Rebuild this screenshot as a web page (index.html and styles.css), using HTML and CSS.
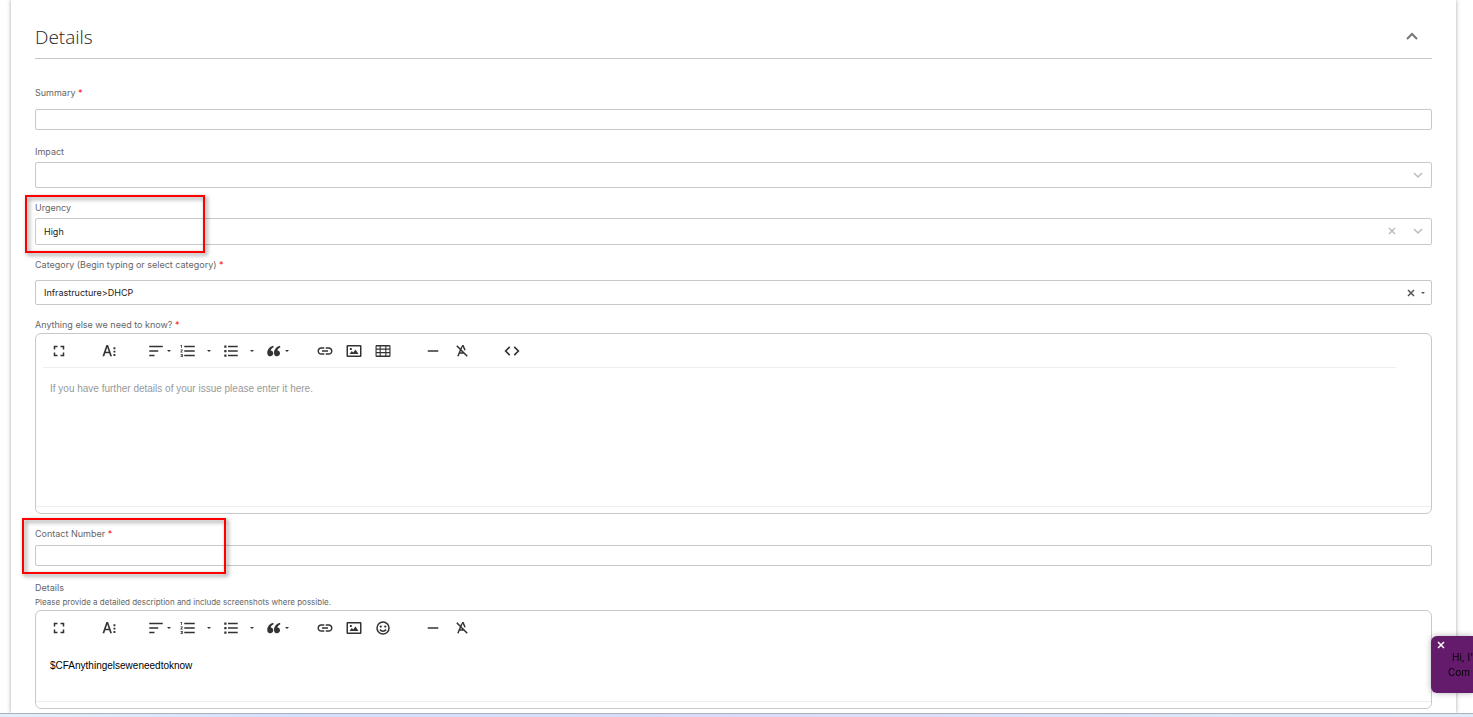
FILE: index.html
```html
<!DOCTYPE html>
<html lang="en">
<head>
  <meta charset="UTF-8">
  <meta name="viewport" content="width=device-width, initial-scale=1.0">
  <title>Details</title>
  <link rel="stylesheet" href="styles.css">
</head>
<body>

  <!-- Shared icons -->
  <svg class="sprite" aria-hidden="true">
    <symbol id="i-full" viewBox="0 0 24 24"><path d="M5 10V5h5v2H7v3zM14 5h5v5h-2V7h-3zM5 14h2v3h3v2H5zM17 14h2v5h-5v-2h3z"/></symbol>
    <symbol id="i-font" viewBox="0 0 24 24"><path d="M8.500 4h2.300l5.200 15h-2.400l-1.300-4H7l-1.300 4H3.300zm-.8 9h3.900L9.700 7zM18 7h2.500v2.500H18zM18 11.500h2.500V14H18zM18 16h2.500v2.500H18z"/></symbol>
    <symbol id="i-align" viewBox="0 0 24 24"><path d="M3 5h18v2H3zM3 11h12v2H3zM3 17h7v2H3z"/></symbol>
    <symbol id="i-ol" viewBox="0 0 24 24"><path d="M2 17h2v.5H3v1h1v.5H2v1h3v-4H2v1zm1-9h1V4H2v1h1v3zm-1 3h1.800L2 13.100v.9h3v-1H3.200L5 10.900V10H2v1zm5-6v2h14V5H7zm0 14h14v-2H7v2zm0-6h14v-2H7v2z"/></symbol>
    <symbol id="i-ul" viewBox="0 0 24 24"><path d="M3 4.500h3v3H3zM3 10.500h3v3H3zM3 16.500h3v3H3zM8 5h13v2H8zM8 11h13v2H8zM8 17h13v2H8z"/></symbol>
    <symbol id="i-quote" viewBox="0 0 24 24"><path d="M11 5C6 6.500 3 10 3 14.500 3 17.500 5 19 7 19c2.300 0 4-1.700 4-3.900 0-2.100-1.500-3.700-3.500-3.700C8 9.500 9 8 11.500 7zM20 5c-5 1.500-8 5-8 9.500 0 3 2 4.500 4 4.500 2.300 0 4-1.700 4-3.900 0-2.100-1.500-3.700-3.500-3.700C17 9.500 18 8 20.500 7z"/></symbol>
    <symbol id="i-link" viewBox="0 0 24 24"><path d="M3.900 12c0-1.710 1.390-3.100 3.100-3.100h4V7H7c-2.760 0-5 2.240-5 5s2.240 5 5 5h4v-1.900H7c-1.710 0-3.100-1.390-3.100-3.100zM8 13h8v-2H8v2zm9-6h-4v1.900h4c1.710 0 3.100 1.390 3.100 3.100s-1.390 3.100-3.100 3.100h-4V17h4c2.760 0 5-2.240 5-5s-2.240-5-5-5z"/></symbol>
    <symbol id="i-image" viewBox="0 0 24 24"><path fill-rule="evenodd" d="M3 4h18l1 1v14l-1 1H3l-1-1V5zm1 2v12h16V6zM6 16l3-4 2 2 3-4 4 6zM6.500 8h2.500v2.500H6.500z"/></symbol>
    <symbol id="i-table" viewBox="0 0 24 24"><path fill-rule="evenodd" d="M3 4h18l1 1v14l-1 1H3l-1-1V5zm.5 2v2.700h4V6zm5.500 0v2.700h6V6zm7.500 0v2.700h4V6zm-13 4.200v3.200h4v-3.200zm5.500 0v3.200h6v-3.200zm7.500 0v3.200h4v-3.200zm-13 4.700v3.100h4v-3.100zm5.500 0v3.100h6v-3.100zm7.500 0v3.100h4v-3.100z"/></symbol>
    <symbol id="i-smile" viewBox="0 0 24 24"><path d="M12 4a8 8 0 1 0 0 16 8 8 0 0 0 0-16zM8 14c1 1.500 2.500 2.300 4 2.300s3-.8 4-2.300" fill="none" stroke="currentColor" stroke-width="2"/><circle cx="9" cy="10" r="1.500"/><circle cx="15" cy="10" r="1.500"/></symbol>
    <symbol id="i-hr" viewBox="0 0 24 24"><path d="M5 11h14v2H5z"/></symbol>
    <symbol id="i-clear" viewBox="0 0 24 24"><path d="M5 5l14 14M12 6L6.500 19M8.500 14.500h6M12 5h1.500l2.500 6" fill="none" stroke="currentColor" stroke-width="2"/></symbol>
    <symbol id="i-code" viewBox="0 0 24 24"><path d="M9 6.500L3.500 12 9 17.500M15 6.500l5.500 5.500-5.500 5.500" fill="none" stroke="currentColor" stroke-width="2.200"/></symbol>
    <symbol id="i-caret" viewBox="0 0 8 8"><path d="M2 3h4L4 5z"/></symbol>
    <symbol id="i-x" viewBox="0 0 10 10"><path d="M2 2l6 6M8 2L2 8" fill="none" stroke="currentColor" stroke-width="1.500"/></symbol>
    <symbol id="i-chevron" viewBox="0 0 10 10"><path d="M1 3l4 4 4-4" fill="none" stroke="currentColor" stroke-width="1.500"/></symbol>
  </svg>

  <main class="card">
    <header class="card-header">
      <h1>Details</h1>
      <button type="button" class="collapse" aria-label="Collapse section">
        <svg viewBox="0 0 14 10"><path d="M2 7l5-5 5 5"/></svg>
      </button>
    </header>

    <form>
      <div class="field field-text">
        <label for="summary">Summary <span class="req">*</span></label>
        <input type="text" id="summary" class="control">
      </div>

      <div class="field">
        <label for="impact">Impact</label>
        <div class="select-wrap">
          <select id="impact" class="control"><option></option></select>
          <div class="select-icons"><svg class="icon-sm"><use href="#i-chevron"/></svg></div>
        </div>
      </div>

      <div class="field field-urgency">
        <label for="urgency">Urgency</label>
        <div class="select-wrap">
          <select id="urgency" class="control"><option>High</option></select>
          <div class="select-icons">
            <button type="button" aria-label="Clear urgency"><svg class="icon-sm"><use href="#i-x"/></svg></button>
            <svg class="icon-sm"><use href="#i-chevron"/></svg>
          </div>
        </div>
        <div class="highlight highlight-urgency"></div>
      </div>

      <div class="field field-category">
        <label for="category">Category (Begin typing or select category) <span class="req">*</span></label>
        <div class="select-wrap">
          <select id="category" class="control"><option>Infrastructure&gt;DHCP</option></select>
          <div class="select-icons">
            <button type="button" aria-label="Clear category"><svg class="icon-sm"><use href="#i-x"/></svg></button>
            <svg class="caret"><use href="#i-caret"/></svg>
          </div>
        </div>
      </div>

      <div class="field field-editor">
        <label for="anything">Anything else we need to know? <span class="req">*</span></label>
        <div class="editor">
          <div class="toolbar toolbar-ruled">
            <div class="group wide"><button type="button" aria-label="Full screen"><svg><use href="#i-full"/></svg></button></div>
            <div class="group"><button type="button" aria-label="Text style"><svg><use href="#i-font"/></svg></button></div>
            <div class="group lists">
              <button type="button" aria-label="Align"><svg><use href="#i-align"/></svg><svg class="caret"><use href="#i-caret"/></svg></button>
              <button type="button" aria-label="Ordered list"><svg><use href="#i-ol"/></svg></button>
              <button type="button" class="split" aria-label="Ordered list options"><svg class="caret"><use href="#i-caret"/></svg></button>
              <button type="button" aria-label="Unordered list"><svg><use href="#i-ul"/></svg></button>
              <button type="button" class="split" aria-label="Unordered list options"><svg class="caret"><use href="#i-caret"/></svg></button>
              <button type="button" aria-label="Quote"><svg><use href="#i-quote"/></svg><svg class="caret"><use href="#i-caret"/></svg></button>
            </div>
            <div class="group wide">
              <button type="button" aria-label="Insert link"><svg><use href="#i-link"/></svg></button>
              <button type="button" aria-label="Insert image"><svg><use href="#i-image"/></svg></button>
              <button type="button" aria-label="Insert table"><svg><use href="#i-table"/></svg></button>
            </div>
            <div class="group wide">
              <button type="button" aria-label="Horizontal line"><svg><use href="#i-hr"/></svg></button>
              <button type="button" aria-label="Clear formatting"><svg><use href="#i-clear"/></svg></button>
            </div>
            <div class="group"><button type="button" aria-label="Code view"><svg><use href="#i-code"/></svg></button></div>
          </div>
          <textarea id="anything" class="tall" placeholder="If you have further details of your issue please enter it here."></textarea>
          <div class="editor-foot"></div>
        </div>
      </div>

      <div class="field field-contact">
        <label for="contact">Contact Number <span class="req">*</span></label>
        <input type="text" id="contact" class="control">
        <div class="highlight highlight-contact"></div>
      </div>

      <div class="field field-editor">
        <label for="details">Details</label>
        <p class="help" id="details-help">Please provide a detailed description and include screenshots where possible.</p>
        <div class="editor">
          <div class="toolbar">
            <div class="group wide"><button type="button" aria-label="Full screen"><svg><use href="#i-full"/></svg></button></div>
            <div class="group"><button type="button" aria-label="Text style"><svg><use href="#i-font"/></svg></button></div>
            <div class="group lists">
              <button type="button" aria-label="Align"><svg><use href="#i-align"/></svg><svg class="caret"><use href="#i-caret"/></svg></button>
              <button type="button" aria-label="Ordered list"><svg><use href="#i-ol"/></svg></button>
              <button type="button" class="split" aria-label="Ordered list options"><svg class="caret"><use href="#i-caret"/></svg></button>
              <button type="button" aria-label="Unordered list"><svg><use href="#i-ul"/></svg></button>
              <button type="button" class="split" aria-label="Unordered list options"><svg class="caret"><use href="#i-caret"/></svg></button>
              <button type="button" aria-label="Quote"><svg><use href="#i-quote"/></svg><svg class="caret"><use href="#i-caret"/></svg></button>
            </div>
            <div class="group wide">
              <button type="button" aria-label="Insert link"><svg><use href="#i-link"/></svg></button>
              <button type="button" aria-label="Insert image"><svg><use href="#i-image"/></svg></button>
              <button type="button" aria-label="Insert emoji"><svg><use href="#i-smile"/></svg></button>
            </div>
            <div class="group">
              <button type="button" aria-label="Horizontal line"><svg><use href="#i-hr"/></svg></button>
              <button type="button" aria-label="Clear formatting"><svg><use href="#i-clear"/></svg></button>
            </div>
          </div>
          <textarea id="details" aria-describedby="details-help">$CFAnythingelseweneedtoknow</textarea>
          <div class="editor-foot"></div>
        </div>
      </div>
    </form>
  </main>

  <div class="bottom-bar"></div>

  <!-- Chat bubble sliding in from the right -->
  <aside class="chat">
    <button type="button" aria-label="Close chat"><svg class="icon-sm"><use href="#i-x"/></svg></button>
    <p>Hi, I'm<br>Com</p>
  </aside>

</body>
</html>
```
FILE: styles.css
```css
* { box-sizing: border-box; }
body {
  margin: 0;
  min-height: 100vh;
  display: flex;
  flex-direction: column;
  background: #fff;
  color: #222;
  font-family: Inter, "Open Sans", sans-serif;
  font-size: 9px;
  line-height: 12px;
  overflow: hidden;
}
.sprite {
  display: none;
}
svg {
  display: block;
  fill: currentColor;
}
button {
  display: flex;
  align-items: center;
  padding: 0;
  border: 0;
  background: none;
  color: inherit;
  cursor: pointer;
}
.card {
  flex: 1;
  margin: 0 17px 0 11px;
  padding: 16px 24px 4px;
  background: #fff;
  box-shadow: 0 0 4px rgba(0,0,0,0.35);
}
.card-header {
  display: flex;
  justify-content: space-between;
  align-items: center;
  height: 43px;
  padding-right: 13px;
  border-bottom: 1px solid #c8c8c8;
  margin-bottom: 28px;
}
h1 {
  margin: 0;
  font-family: "Open Sans", sans-serif;
  font-size: 19px;
  line-height: 28px;
  font-weight: 300;
  color: #222;
}
.collapse svg {
  width: 14px;
  height: 10px;
  fill: none;
  stroke: #777;
  stroke-width: 2;
}

/* Fields */
.field {
  position: relative;
  margin-bottom: 14px;
}
.field:last-child {
  margin-bottom: 0;
}
label {
  display: block;
  margin-bottom: 4px;
  color: #666;
}
.req {
  color: #f00;
}
.control {
  display: block;
  width: 100%;
  height: 21px;
  padding: 0 8px;
  border: 1px solid #c8c8c8;
  border-radius: 2px;
  background: #fff;
  color: #222;
  font: inherit;
  appearance: none;
}
.field-text {
  margin-bottom: 16px;
}
.field-text label {
  margin-bottom: 10px;
}
.select-wrap {
  position: relative;
}
.select-wrap .control {
  height: 26px;
}
.field-urgency .control {
  height: 27px;
}
.field-category .control {
  height: 25px;
}
.select-icons {
  position: absolute;
  top: 0;
  right: 9px;
  height: 26px;
  display: flex;
  align-items: center;
  gap: 16px;
  color: #bbb;
  pointer-events: none;
}
.select-icons button {
  pointer-events: auto;
}
.icon-sm {
  width: 10px;
  height: 10px;
}
.field-category label {
  margin-bottom: 9px;
}
.field-category .select-icons {
  right: 5px;
  height: 25px;
  gap: 3px;
  color: #555;
}
.field-editor label {
  margin-bottom: 2px;
}
.field-contact {
  margin-bottom: 16px;
}
.field-contact label {
  margin-bottom: 5px;
}
.help {
  margin: 0 0 2px;
  color: #666;
  font-size: 8px;
}

/* Editor */
.editor {
  border: 1px solid #c8c8c8;
  border-radius: 6px;
}
.toolbar {
  display: flex;
  align-items: center;
  gap: 27px;
  height: 34px;
  margin: 0 35px 0 7px;
  padding-left: 7px;
  border-bottom: 1px solid transparent;
  color: #333;
}
.toolbar-ruled {
  border-bottom-color: #eee;
}
.toolbar svg {
  width: 18px;
  height: 18px;
}
.toolbar .caret, .caret {
  width: 8px;
  height: 8px;
}
.group {
  display: flex;
  gap: 11px;
}
.group.wide {
  margin-right: 5px;
}
.group.lists {
  gap: 6px;
  margin: 0 -2px 0 2px;
}
.split {
  margin: 0 3px 0 2px;
}
textarea {
  display: block;
  width: 100%;
  height: 56px;
  padding: 15px 14px;
  border: 0;
  background: none;
  color: #000;
  font: 10px/12px "Liberation Sans", Arial, sans-serif;
  resize: none;
}
textarea.tall {
  height: 138px;
}
textarea::placeholder {
  color: #999;
}
.editor-foot {
  height: 7px;
  border-top: 1px solid #eee;
}

/* Red markers around the fields to look at */
.highlight {
  position: absolute;
  border: 2px solid #f00;
  filter: drop-shadow(2px 2px 2px rgba(0,0,0,0.5));
  pointer-events: none;
}
.highlight-urgency {
  top: -7px;
  left: -10px;
  width: 180px;
  height: 58px;
}
.highlight-contact {
  top: -10px;
  left: -13px;
  width: 204px;
  height: 56px;
}
.bottom-bar {
  flex: none;
  height: 4px;
  border-top: 1px solid #a9b1bd;
  background: linear-gradient(90deg, #e4effb, #d3e0fa 20%, #d9dcf6 50%, #dfeafa);
  position: relative;
}
.chat {
  position: fixed;
  right: 0;
  bottom: 24px;
  width: 42px;
  height: 57px;
  padding: 4px 0 0 5px;
  overflow: hidden;
  border-radius: 6px 0 0 6px;
  background: #651b6b;
  box-shadow: 0 0 6px rgba(0,0,0,0.3);
  color: #fff;
}
.chat p {
  margin: 0 0 0 12px;
  color: #000;
  font-size: 10px;
  line-height: 15px;
  text-indent: 4px;
  white-space: nowrap;
}
```
